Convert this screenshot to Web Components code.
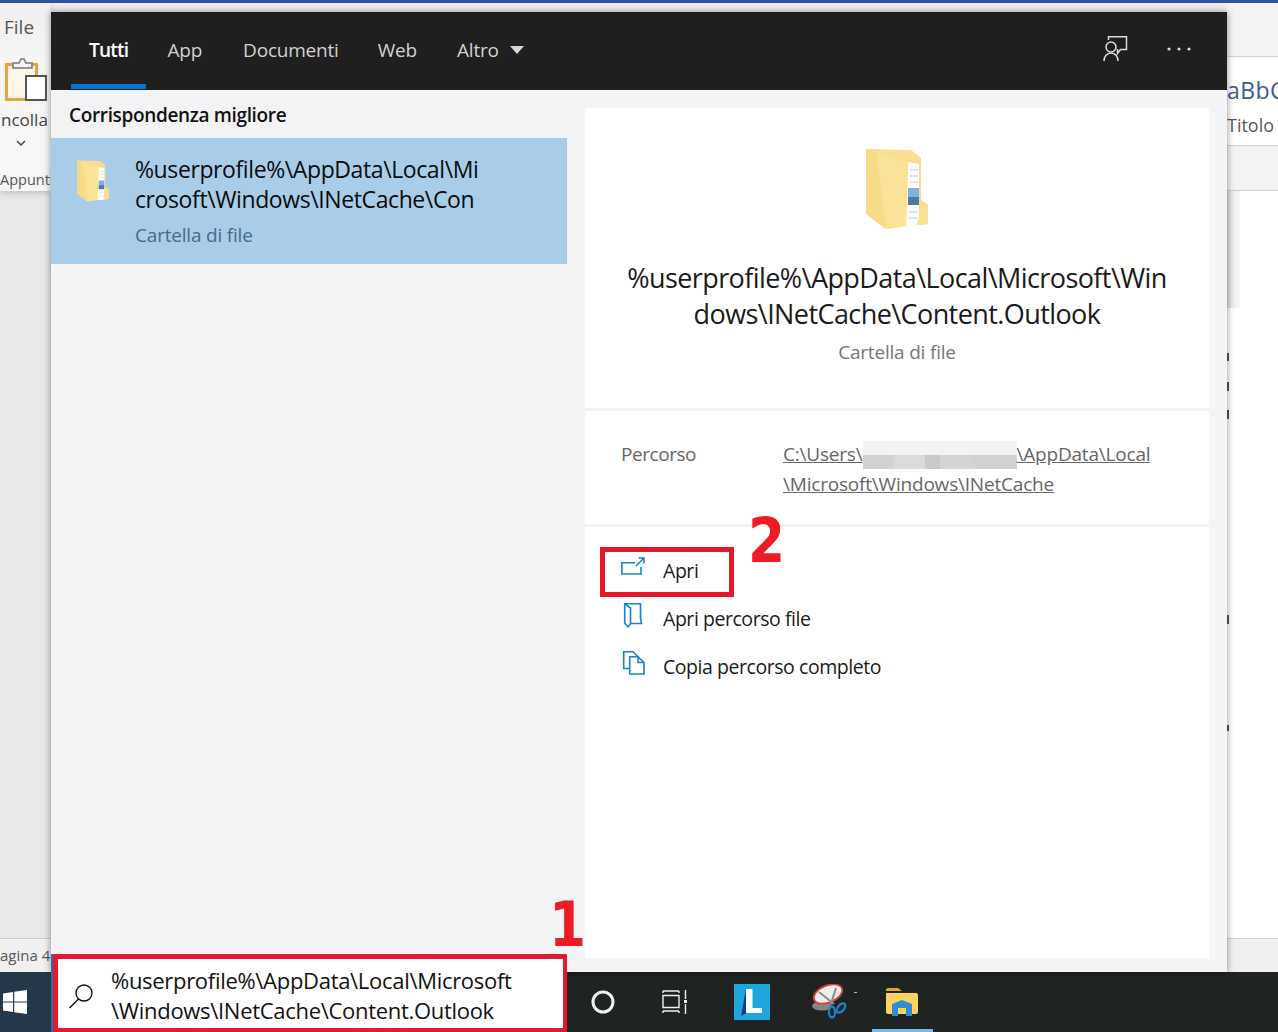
<!DOCTYPE html>
<html lang="it">
<head>
<meta charset="utf-8">
<title>Ricerca</title>
<style>
html, body { margin: 0; padding: 0; height: 100%; overflow: hidden; }
body { font-family: "Open Sans", "Noto Sans", sans-serif; }
</style>
</head>
<body>
<x-desktop>
    <x-word></x-word>
    <x-taskbar></x-taskbar>
    <x-search-panel></x-search-panel>
    <x-search-box>%userprofile%\AppData\Local\Microsoft<br>\Windows\INetCache\Content.Outlook</x-search-box>
    <x-marker num="1" style="left:549px;top:888px"></x-marker>
    <x-marker num="2" style="left:748px;top:504px"></x-marker>
    <x-redbox style="left:600px;top:547px;width:134px;height:50px"></x-redbox>
</x-desktop>

<script>
const FOLDER = `
<svg viewBox="0 0 62 82" width="100%" height="100%">
    <path d="M0 1 L45 2 L55 10 L55 52 L62 57 L62 76 L40 78 L20 81 L0 66 Z" fill="#f7dd8d"/>
    <path d="M42 14 L53 16 L53 78 L40 78 Z" fill="#fdfdfd"/>
    <path d="M44 22h8M44 28h8M44 34h8M43 64h9M43 70h9" stroke="#cfdbe6" stroke-width="1.500"/>
    <path d="M42 40h11v9H42z" fill="#7fb2dd"/>
    <path d="M42 49h11v8H42z" fill="#4a7ba6"/>
    <path d="M53 52 L62 57 L62 76 L50 77 L53 70 Z" fill="#f8df92"/>
    <path d="M10 3 L42 14 L40 78 L20 81 Z" fill="#fae296"/>
    <path d="M0 1 L10 3 L20 81 L0 66 Z" fill="#f7db86"/>
</svg>`;

class XDesktop extends HTMLElement {
    constructor() {
        super();
        this.attachShadow({ mode: 'open' });
        this.shadowRoot.innerHTML = `
            <style>
                :host { display: flex; flex-direction: column; position: relative; width: 1278px; height: 1032px; overflow: hidden; background: #fff; }
            </style>
            <slot></slot>`;
    }
}

class XWord extends HTMLElement {
    constructor() {
        super();
        this.attachShadow({ mode: 'open' });
        this.shadowRoot.innerHTML = `
            <style>
                :host { display: flex; flex-direction: column; height: 972px; background: #e8e8e9; color: #444; }
                .title { height: 3px; background: #2b579a; flex: none; }
                .ribbon { height: 188px; flex: none; display: flex; justify-content: space-between; background: linear-gradient(#efeff0, #f5f5f5 30%); position: relative; }
                .left { width: 51px; overflow: hidden; white-space: nowrap; display: flex; flex-direction: column; box-shadow: 0 2px 6px rgba(0,0,0,.18); }
                .file { font-size: 19px; line-height: 24px; margin: 12px 0 0 4px; color: #555; }
                .paste { margin: 19px 0 0 5px; width: 43px; height: 44px; display: block; flex: none; }
                .incolla { font-size: 17px; line-height: 24px; margin: 6px 0 0 1px; color: #444; }
                .chev { margin: 7px 0 0 16px; width: 10px; height: 8px; display: block; flex: none; }
                .appunti { font-size: 14.500px; line-height: 20px; margin: 23px 0 0 0; color: #555; }
                .right { width: 51px; overflow: hidden; white-space: nowrap; display: flex; flex-direction: column; }
                .r1 { height: 53px; border-bottom: 1px solid #d4d4d4; background: #f3f3f4; flex: none; }
                .styles { height: 88px; background: #fff; border-bottom: 1px solid #cfcfcf; flex: none; }
                .abc { font-size: 23px; line-height: 30px; margin-top: 18px; color: #3d5a94; letter-spacing: .4px; }
                .tit { font-size: 18px; line-height: 24px; margin-top: 8px; color: #595959; }
                .r3 { flex: 1; background: #f3f3f4; border-bottom: 1px solid #cfcfcf; }
                .doc { flex: 1; display: flex; justify-content: flex-end; }
                .page { width: 51px; background: #fff; position: relative; }
                .strip { width: 13px; height: 117px; background: linear-gradient(90deg, #dcdcde, #f2f2f4 60%, #f6f6f7); }
                .page i { position: absolute; left: 0; width: 2px; height: 8px; background: #555; }
                .status { height: 33px; flex: none; border-top: 1px solid #cdcdcd; background: #f0f0f0; font-size: 15px; line-height: 33px; color: #555; white-space: nowrap; }
            </style>
            <div class="title"></div>
            <div class="ribbon">
                <div class="left">
                    <div class="file">File</div>
                    <svg class="paste" viewBox="0 0 43 44">
                        <rect x="1.500" y="6.500" width="30" height="35" fill="#fdf6e8" stroke="#eba43c" stroke-width="3"/>
                        <path d="M8 10V5h6l2-4h3l2 4h6v5z" fill="#f2f2f2" stroke="#777" stroke-width="1.500"/>
                        <rect x="21" y="18" width="20" height="24" fill="#fff" stroke="#555" stroke-width="2"/>
                    </svg>
                    <div class="incolla">ncolla</div>
                    <svg class="chev" viewBox="0 0 10 8"><path d="M1 2l4 4 4-4" fill="none" stroke="#444" stroke-width="1.500"/></svg>
                    <div class="appunti">Appunti</div>
                </div>
                <div class="right">
                    <div class="r1"></div>
                    <div class="styles">
                        <div class="abc">aBbC</div>
                        <div class="tit">Titolo 2</div>
                    </div>
                    <div class="r3"></div>
                </div>
            </div>
            <div class="doc">
                <div class="page">
                    <div class="strip"></div>
                    <i style="top:162px"></i><i style="top:191px;height:9px"></i><i style="top:219px;height:9px"></i>
                    <i style="top:424px;height:9px"></i><i style="top:534px;height:6px"></i>
                </div>
            </div>
            <div class="status">agina 4</div>`;
    }
}

class XTaskbar extends HTMLElement {
    constructor() {
        super();
        this.attachShadow({ mode: 'open' });
        this.shadowRoot.innerHTML = `
            <style>
                :host { display: flex; height: 60px; background: #1f2422; }
                .start { width: 51px; background: #25384a; display: flex; align-items: center; padding-left: 3px; box-sizing: border-box; }
                .gap { width: 516px; flex: none; }
                .cell { display: flex; align-items: center; justify-content: center; position: relative; flex: none; }
                .active::after { content: ""; position: absolute; left: 7px; right: 6px; bottom: 0; height: 3px; background: #76b9ed; }
                .dot { position: absolute; right: 8px; top: 20px; width: 3px; height: 1px; background: #bbb; }
            </style>
            <div class="start">
                <svg width="24" height="24" viewBox="0 0 24 24"><path d="M0 3.400l10-1.400v9.400H0zM11.200 1.800L24 0v11.400H11.200zM0 12.600h10V22L0 20.600zM11.200 12.600H24V24l-12.800-1.800z" fill="#fff"/></svg>
            </div>
            <div class="gap"></div>
            <div class="cell" style="width:72px">
                <svg width="24" height="24" viewBox="0 0 24 24"><circle cx="12" cy="12" r="10" fill="none" stroke="#f0f0f0" stroke-width="3"/></svg>
            </div>
            <div class="cell" style="width:72px">
                <svg width="26" height="24" viewBox="0 0 26 24" fill="none" stroke="#f0f0f0" stroke-width="1.400">
                    <path d="M1 3V1M17 3V1M1 1h16M1 5.500h16v12H1zM1 21v2M17 21v2M1 21h16M23.500 0v9M23.500 14v10"/>
                    <rect x="22" y="10" width="3" height="3" fill="#f0f0f0" stroke="none"/>
                </svg>
            </div>
            <div class="cell" style="width:82px">
                <svg width="36" height="36" viewBox="0 0 36 36">
                    <rect width="36" height="36" fill="#1fa6dc"/>
                    <path d="M12 5l-5 27 6-3z" fill="#123f8c"/>
                    <path d="M12 5h6.500v19H28v5H12z" fill="#fff"/>
                </svg>
            </div>
            <div class="cell" style="width:72px">
                <svg width="36" height="36" viewBox="0 0 36 36">
                    <ellipse cx="11" cy="22" rx="10" ry="4.500" fill="#858585"/>
                    <ellipse cx="17" cy="10" rx="15" ry="8.500" transform="rotate(-22 17 10)" fill="#f0eeea" stroke="#cf3f3c" stroke-width="1.800"/>
                    <path d="M8 8l15 12M25 4l-5 16" stroke="#8d8d8d" stroke-width="2.200"/>
                    <ellipse cx="21" cy="28" rx="3" ry="5.500" fill="none" stroke="#1e80c8" stroke-width="2.400"/>
                    <ellipse cx="30" cy="24" rx="3" ry="5.500" fill="none" stroke="#1e80c8" stroke-width="2.400" transform="rotate(40 30 24)"/>
                </svg>
                <div class="dot"></div>
            </div>
            <div class="cell active" style="width:74px">
                <svg width="32" height="28" viewBox="0 0 32 28">
                    <path d="M0 2a2 2 0 012-2h10l4 3H0z" fill="#e3a81f"/>
                    <path d="M0 5h30a2 2 0 012 2v17a2 2 0 01-2 2H2a2 2 0 01-2-2z" fill="#fbd45f"/>
                    <path d="M6 16l10-4 10 4v12h-6v-6h-8v6H6z" fill="#2a8fd8"/>
                    <rect x="12" y="20" width="8" height="4" fill="#fbd45f"/>
                </svg>
            </div>`;
    }
}

class XTab extends HTMLElement {
    constructor() {
        super();
        this.attachShadow({ mode: 'open' });
        this.shadowRoot.innerHTML = `
            <style>
                :host { display: flex; align-items: center; gap: 11px; height: 76px; padding: 0 18px 2px; color: #d2d2d2; font-size: 19px; letter-spacing: -.2px; position: relative; }
                :host([active]) { color: #fff; font-weight: 600; letter-spacing: -.75px; }
                :host([active])::after { content: ""; position: absolute; left: 0; right: 0; bottom: 1px; height: 5px; background: #0078d4; }
                svg { display: none; }
                :host([menu]) svg { display: block; }
            </style>
            <slot></slot>
            <svg width="14" height="8" viewBox="0 0 14 8"><path d="M0 0h14L7 8z" fill="#d8d8d8"/></svg>`;
    }
}

class XFolder extends HTMLElement {
    constructor() {
        super();
        this.attachShadow({ mode: 'open' });
        this.shadowRoot.innerHTML = `<style>:host { display: block; flex: none; }</style>${FOLDER}`;
    }
}

class XResult extends HTMLElement {
    constructor() {
        super();
        this.attachShadow({ mode: 'open' });
        this.shadowRoot.innerHTML = `
            <style>
                :host { display: flex; height: 126px; box-sizing: border-box; padding: 16px 0 0 26px; background: #a9cde9; }
                x-folder { width: 32px; height: 42px; margin: 6px 26px 0 0; }
                .name { font-size: 23px; line-height: 30px; color: #0b0b0b; letter-spacing: -.4px; }
                .kind { font-size: 19px; line-height: 30px; margin-top: 6px; color: #4a6a85; letter-spacing: -.2px; }
            </style>
            <x-folder></x-folder>
            <div>
                <div class="name"><slot></slot></div>
                <div class="kind">Cartella di file</div>
            </div>`;
    }
}

class XAction extends HTMLElement {
    constructor() {
        super();
        this.attachShadow({ mode: 'open' });
        this.shadowRoot.innerHTML = `
            <style>
                :host { display: flex; align-items: center; gap: 18px; height: 48px; padding-left: 36px; font-size: 19.500px; color: #1a1a1a; letter-spacing: -.45px; }
                .ic { width: 24px; height: 26px; display: flex; margin-top: -6px; }
                .txt { margin-top: -2px; }
            </style>
            <div class="ic"><slot name="icon"></slot></div>
            <div class="txt"><slot></slot></div>`;
    }
}

class XSearchPanel extends HTMLElement {
    constructor() {
        super();
        this.attachShadow({ mode: 'open' });
        this.shadowRoot.innerHTML = `
            <style>
                :host { position: absolute; left: 51px; top: 12px; width: 1176px; height: 960px; display: flex; flex-direction: column; background: #f4f4f6; box-shadow: 0 0 7px rgba(0,0,0,.45); }
                header { height: 78px; flex: none; background: #1f1f1f; display: flex; align-items: flex-start; padding-left: 20px; gap: 3px; }
                .tools { margin-left: auto; align-self: center; display: flex; align-items: center; gap: 39px; padding-right: 36px; margin-top: -4px; }
                .body { flex: 1; display: flex; min-height: 0; }
                .left { width: 516px; flex: none; background: #f3f3f5; }
                h2 { margin: 0; height: 48px; line-height: 50px; padding-left: 18px; font-size: 19px; font-weight: 600; color: #111; letter-spacing: -.35px; }
                .pane { flex: 1; margin: 18px 18px 14px; background: #fff; display: flex; flex-direction: column; }
                .hero { display: flex; flex-direction: column; align-items: center; padding: 40px 0 42px; border-bottom: 3px solid #f2f2f2; }
                .hero x-folder { width: 62px; height: 82px; }
                .title { margin-top: 30px; text-align: center; font-size: 27px; line-height: 36px; color: #1a1a1a; letter-spacing: -.58px; white-space: nowrap; }
                .sub { margin-top: 6px; font-size: 19px; line-height: 28px; color: #767676; letter-spacing: -.2px; }
                .path { display: flex; padding: 28px 0 25px 36px; border-bottom: 3px solid #f2f2f2; font-size: 19px; line-height: 30px; color: #666; letter-spacing: -.2px; }
                .path .lab { width: 162px; flex: none; letter-spacing: -.45px; }
                .path a { color: #666; text-decoration: underline; }
                .blur { display: inline-block; vertical-align: middle; width: 154px; height: 28px; margin-top: -2px; background: linear-gradient(#f3f2f4 50%, transparent 50%), linear-gradient(90deg, #d2d1d3 20%, #dadadb 20% 40%, #c9c8ca 40% 50%, #d4d3d5 50% 70%, #d2d1d3 70%); }
                .actions { padding-top: 20px; }
                svg.b { width: 24px; height: 26px; fill: none; stroke: #1681d2; stroke-width: 1.600; }
            </style>
            <header>
                <x-tab active>Tutti</x-tab>
                <x-tab>App</x-tab>
                <x-tab style="margin-left:2px">Documenti</x-tab>
                <x-tab>Web</x-tab>
                <x-tab menu style="margin-left:1px">Altro</x-tab>
                <div class="tools">
                    <svg width="25" height="26" viewBox="0 0 25 26" fill="none" stroke="#dcdcdc" stroke-width="1.500">
                        <circle cx="8" cy="11" r="5"/>
                        <path d="M1 25c0-4.500 3-8 7-8s7 3.500 7 8M5.500 4V.8h18V13.500h-6l-3 4V13"/>
                    </svg>
                    <svg width="24" height="4" viewBox="0 0 24 4" fill="#dcdcdc"><circle cx="2" cy="2" r="1.600"/><circle cx="12" cy="2" r="1.600"/><circle cx="22" cy="2" r="1.600"/></svg>
                </div>
            </header>
            <div class="body">
                <div class="left">
                    <h2>Corrispondenza migliore</h2>
                    <x-result>%userprofile%\\AppData\\Local\\Mi<br>crosoft\\Windows\\INetCache\\Con</x-result>
                </div>
                <div class="pane">
                    <div class="hero">
                        <x-folder></x-folder>
                        <div class="title">%userprofile%\\AppData\\Local\\Microsoft\\Win<br>dows\\INetCache\\Content.Outlook</div>
                        <div class="sub">Cartella di file</div>
                    </div>
                    <div class="path">
                        <div class="lab">Percorso</div>
                        <div><a>C:\\Users\\<span class="blur"></span>\\AppData\\Local<br>\\Microsoft\\Windows\\INetCache</a></div>
                    </div>
                    <div class="actions">
                        <x-action>
                            <svg class="b" slot="icon" viewBox="0 0 24 26"><path d="M14 7.800H.8V19H20V12M15 11l8-8M17.500 3H23V8.500"/></svg>
                            Apri
                        </x-action>
                        <x-action>
                            <svg class="b" slot="icon" viewBox="0 0 24 26"><path d="M3.700.8H19.500V15l1 5.500H9.500M3.700.8L9.500 5V21L7 24 3.700 20Z"/></svg>
                            Apri percorso file
                        </x-action>
                        <x-action>
                            <svg class="b" slot="icon" viewBox="0 0 24 26"><path d="M8.700 17.500H2.700V.8H12L17 5.800M8.700 5.800H17L23 11.500V23H8.700ZM17 5.800V11.500H23"/></svg>
                            Copia percorso completo
                        </x-action>
                    </div>
                </div>
            </div>`;
    }
}

class XSearchBox extends HTMLElement {
    constructor() {
        super();
        this.attachShadow({ mode: 'open' });
        this.shadowRoot.innerHTML = `
            <style>
                :host { position: absolute; left: 53px; top: 954px; width: 514px; height: 78px; box-sizing: border-box; border: solid #e21a2c; border-width: 5px 4px 4px 5px; background: #fff; display: flex; align-items: center; gap: 17px; padding-left: 10px; font-size: 22px; line-height: 30px; color: #111; letter-spacing: -.3px; white-space: nowrap; box-shadow: -2px 0 0 #2b6cb0; }
                svg { flex: none; margin-top: 4px; }
                .txt { margin-top: 2px; }
            </style>
            <svg width="26" height="26" viewBox="0 0 26 26" fill="none" stroke="#111" stroke-width="1.400"><circle cx="16" cy="10" r="8"/><path d="M10.500 16L1.500 25"/></svg>
            <div class="txt"><slot></slot></div>`;
    }
}

class XMarker extends HTMLElement {
    constructor() {
        super();
        this.attachShadow({ mode: 'open' });
        this.shadowRoot.innerHTML = `
            <style>
                :host { position: absolute; font-family: "DejaVu Sans", sans-serif; font-weight: 700; font-size: 62px; line-height: 74px; color: #ed1c24; transform-origin: left center; transform: scaleX(.86); }
            </style>
            ${this.getAttribute('num')}`;
    }
}

class XRedbox extends HTMLElement {
    constructor() {
        super();
        this.attachShadow({ mode: 'open' });
        this.shadowRoot.innerHTML = `
            <style>:host { position: absolute; box-sizing: border-box; border: 5px solid #e21a2c; }</style>`;
    }
}

customElements.define('x-folder', XFolder);
customElements.define('x-tab', XTab);
customElements.define('x-result', XResult);
customElements.define('x-action', XAction);
customElements.define('x-word', XWord);
customElements.define('x-taskbar', XTaskbar);
customElements.define('x-search-panel', XSearchPanel);
customElements.define('x-search-box', XSearchBox);
customElements.define('x-marker', XMarker);
customElements.define('x-redbox', XRedbox);
customElements.define('x-desktop', XDesktop);
</script>
</body>
</html>
